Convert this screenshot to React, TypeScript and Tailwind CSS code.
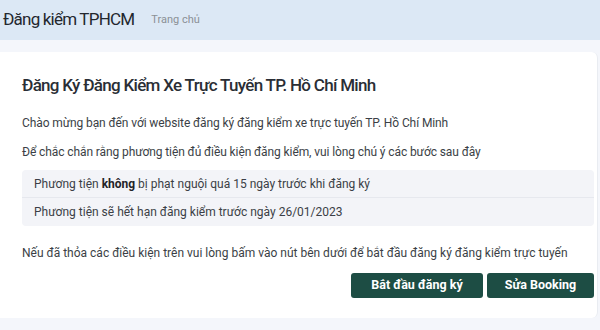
const font = { fontFamily: 'Roboto, "Noto Sans", sans-serif' };

const App = () => {
   return (
      <div className="h-[330px] w-[600px] overflow-hidden bg-[#f4f6fb]" style={font}>
         <header className="flex h-[40px] items-center gap-[17px] bg-[#dce8f5] px-[3px]">
            <span className="text-[17px] tracking-[-0.8px] text-[#23272e]">Đăng kiểm TPHCM</span>
            <span className="text-[11px] text-[#8b9096]">Trang chủ</span>
         </header>
         <main className="pt-[12px]">
            <div className="h-[266px] w-[598px] rounded-r-md border-r border-[#e9ecf1] bg-white pl-[22px] pr-[3px]">
               <h1 className="pt-[21px] text-[17px] leading-[24px] font-medium tracking-[-0.7px] text-[#2a2e35]">
                  Đăng Ký Đăng Kiểm Xe Trực Tuyến TP. Hồ Chí Minh
               </h1>
               <p className="mt-[17px] text-[12px] leading-[18px] tracking-[-0.1px] text-[#3b3f46]">
                  Chào mừng bạn đến với website đăng ký đăng kiểm xe trực tuyến TP. Hồ Chí Minh
               </p>
               <p className="mt-[11px] text-[12px] leading-[18px] tracking-[-0.1px] text-[#3b3f46]">
                  Để chắc chắn rằng phương tiện đủ điều kiện đăng kiểm, vui lòng chú ý các bước sau đây
               </p>
               <ul className="mt-[9px] rounded-sm bg-[#f3f4f8] text-[12px] text-[#3b3f46]">
                  <li className="flex h-[28px] items-center border-b border-[#e6e8ee] px-[12px]">
                     <span>
                        Phương tiện <b className="font-bold text-[#1f2328]">không</b> bị phạt nguội quá 15 ngày trước khi đăng ký
                     </span>
                  </li>
                  <li className="flex h-[28px] items-center px-[12px]">
                     Phương tiện sẽ hết hạn đăng kiểm trước ngày 26/01/2023
                  </li>
               </ul>
               <p className="mt-[18px] text-[12px] leading-[18px] text-[#3b3f46]">
                  Nếu đã thỏa các điều kiện trên vui lòng bấm vào nút bên dưới để bắt đầu đăng ký đăng kiểm trực tuyến
               </p>
               <div className="mt-[11px] flex justify-end gap-[4px]">
                  <button className="h-[25px] w-[132px] rounded-[3px] bg-[#1d4d44] text-[12.5px] font-bold text-white">
                     Bắt đầu đăng ký
                  </button>
                  <button className="h-[25px] w-[107px] rounded-[3px] bg-[#1d4d44] text-[12.5px] font-bold text-white">
                     Sửa Booking
                  </button>
               </div>
            </div>
         </main>
      </div>
   );
};

export default App;
